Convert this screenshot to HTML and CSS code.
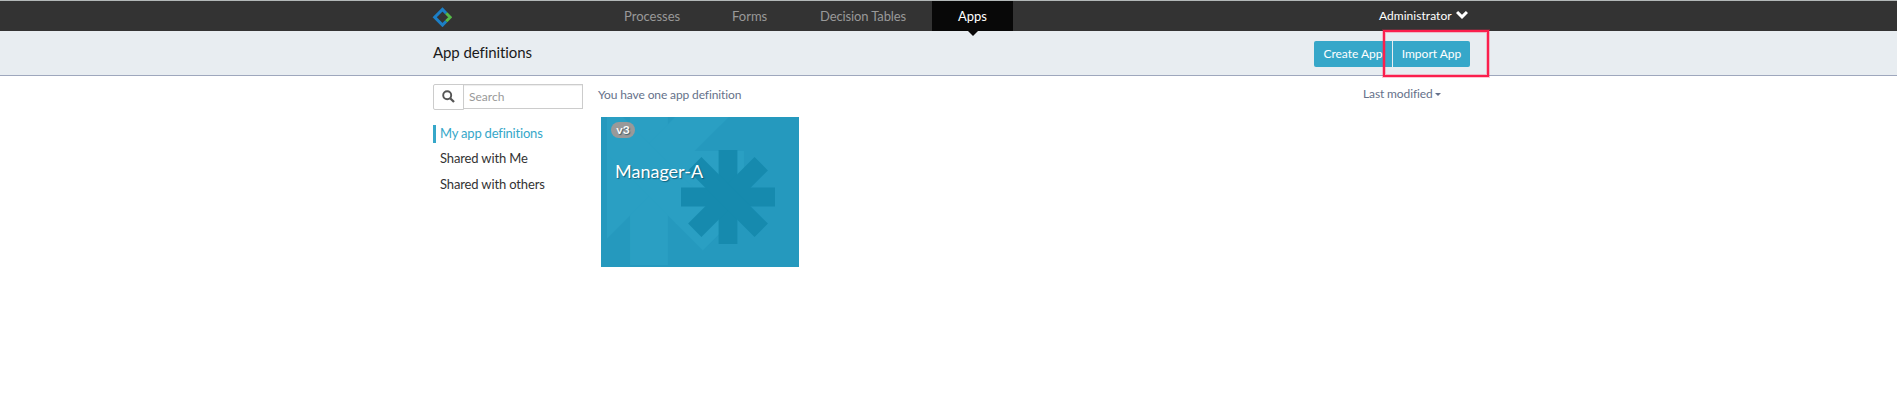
FILE: index.html
```html
<!DOCTYPE html>
<html lang="en">
<head>
<meta charset="utf-8">
<title>App definitions</title>
<link rel="stylesheet" href="styles.css">
</head>
<body>
<header class="navbar">
  <svg class="logo" width="20" height="20" viewBox="0 0 20 20" fill="none" stroke-width="3"><path d="M14.2 6.3 10.5 2.5 2.7 10.3l7.8 7.8 3.7-3.8" stroke="#1c7fc6"/><path d="M14.2 6.3 18.2 10.3l-4 4" stroke="#55b948"/></svg>
  <nav class="tabs">
    <a class="tab processes">Processes</a>
    <a class="tab forms">Forms</a>
    <a class="tab tables">Decision Tables</a>
    <a class="tab active">Apps</a>
  </nav>
  <div class="user"><span>Administrator</span><svg width="12" height="8" viewBox="0 0 12 8"><path d="M0 2.1 2.1 0 6 3.7 9.9 0 12 2.1 6 8z" fill="#fff"/></svg></div>
</header>
<section class="subheader">
  <h1>App definitions</h1>
  <div class="actions">
    <button class="btn create">Create App</button>
    <button class="btn import">Import App</button>
    <div class="highlight"></div>
  </div>
</section>
<main class="content">
  <aside class="sidebar">
    <div class="search">
      <span class="addon"><svg width="13" height="13" viewBox="0 0 13 13" fill="none" stroke="#555"><circle cx="5.2" cy="5.2" r="4" stroke-width="1.9"/><path d="m8.2 8.2 3.8 3.8" stroke-width="2.3"/></svg></span>
      <input type="text" placeholder="Search">
    </div>
    <ul class="filters">
      <li class="current">My app definitions</li>
      <li>Shared with Me</li>
      <li>Shared with others</li>
    </ul>
  </aside>
  <section class="list">
    <div class="summary">
      <span class="count">You have one app definition</span>
      <span class="sort">Last modified<i class="caret"></i></span>
    </div>
    <article class="card">
      <svg class="art" width="198" height="150" viewBox="0 0 198 150">
        <defs>
          <clipPath id="edge"><path d="M6 0h192v150H6z"/></clipPath>
          <g id="star"><path id="bar" d="M-9.4-47H9.4V47H-9.4z"/><use href="#bar" transform="rotate(45)"/><use href="#bar" transform="rotate(90)"/><use href="#bar" transform="rotate(135)"/></g>
        </defs>
        <g clip-path="url(#edge)"><use href="#star" fill="#2a9fc3" transform="translate(48 53) scale(2.02)"/></g>
        <use href="#star" fill="#168aae" transform="translate(127 80)"/>
      </svg>
      <div class="info">
        <span class="badge">v3</span>
        <h2>Manager-A</h2>
      </div>
    </article>
  </section>
</main>
</body>
</html>
```
FILE: styles.css
```css
* { box-sizing: border-box; }
body { margin: 0; background: #fff; font-family: Lato, sans-serif; font-size: 13px; color: #333; }
.navbar { height: 31px; border-top: 1px solid #b3b8b8; background: #333; display: flex; padding-left: 432px; }
.logo { margin-top: 6px; flex: none; }
.tabs { display: flex; margin-left: 145px; width: 419px; flex: none; }
.tab { height: 30px; line-height: 31px; font-size: 13px; color: #999; padding-left: 27px; white-space: nowrap; }
.processes { width: 108px; }
.forms { width: 87px; }
.tables { width: 140px; padding-left: 28px; letter-spacing: -.12px; }
.active { width: 81px; padding-left: 26px; background: #080808; color: #fff; position: relative; }
.active::after { content: ""; position: absolute; left: 36px; top: 30px; border: 5px solid transparent; border-top-color: #080808; border-bottom: 0; }
.user { margin-left: 363px; display: flex; gap: 4px; color: #fff; font-size: 12px; line-height: 30px; letter-spacing: .04px; }
.user svg { margin-top: 10px; }
.subheader { height: 45px; background: #e8edf1; border-bottom: 1px solid #9ea7bd; padding-left: 433px; display: flex; }
h1 { font-size: 15px; font-weight: 400; line-height: 18px; margin: 12px 0 0; width: 881px; color: #1a1a1a; letter-spacing: -.08px; }
.actions { display: flex; gap: 1px; margin-top: 10px; height: 26px; position: relative; }
.btn { border: 0; background: #36a7c9; color: #fff; font: 12px/26px Lato, sans-serif; height: 26px; padding: 0; white-space: nowrap; }
.create { width: 78px; border-radius: 2px 0 0 2px; }
.import { width: 77px; border-radius: 0 2px 2px 0; }
.highlight { position: absolute; left: 69px; top: -11px; width: 106px; height: 47px; border: 2px solid #fb1f4d; box-shadow: 0 0 0 1px rgba(251,31,77,.25), inset 0 0 0 1px rgba(251,31,77,.25); }
.content { display: flex; padding: 8px 0 0 433px; }
.sidebar { width: 150px; margin-right: 15px; }
.search { display: flex; height: 26px; }
.addon { width: 31px; height: 26px; border: 1px solid #ccc; border-radius: 2px 0 0 2px; padding: 5px 0 0 8px; }
.search input { width: 120px; margin-left: -1px; height: 25px; border: 1px solid #ccc; padding: 0 5px; font: 12px Lato, sans-serif; border-radius: 0; outline: 0; box-shadow: inset 0 1px 1px rgba(0,0,0,.075); }
.search input::placeholder { color: #999; }
.filters { list-style: none; margin: 15px 0 0; padding: 0; }
.filters li { border-left: 3px solid transparent; padding-left: 4px; height: 18px; line-height: 16px; margin-bottom: 8px; font-size: 13px; letter-spacing: -.14px; }
.filters .current { border-color: #36a7c9; color: #36a7c9; margin-bottom: 7px; letter-spacing: -.2px; }
.summary { display: flex; height: 33px; padding-top: 2px; line-height: 18px; font-size: 12px; color: #65718a; letter-spacing: -.12px; }
.count { width: 765px; }
.sort { display: flex; margin-top: -1px; }
.caret { border: 3px solid transparent; border-top-color: #65718a; border-bottom: 0; margin: 8px 0 0 2px; height: 3px; }
.card { width: 198px; height: 150px; margin-left: 3px; background: #2599be; position: relative; overflow: hidden; }
.art { display: block; }
.info { position: absolute; left: 10px; top: 5px; color: #fff; text-shadow: 1px 1px 1px rgba(0,60,80,.6); }
.badge { display: block; width: 24px; height: 16px; border-radius: 8px; background: #999; font-size: 12px; font-weight: 700; line-height: 16px; text-align: center; }
h2 { margin: 21px 0 0 4px; font-size: 18px; font-weight: 400; line-height: 24px; }
```
